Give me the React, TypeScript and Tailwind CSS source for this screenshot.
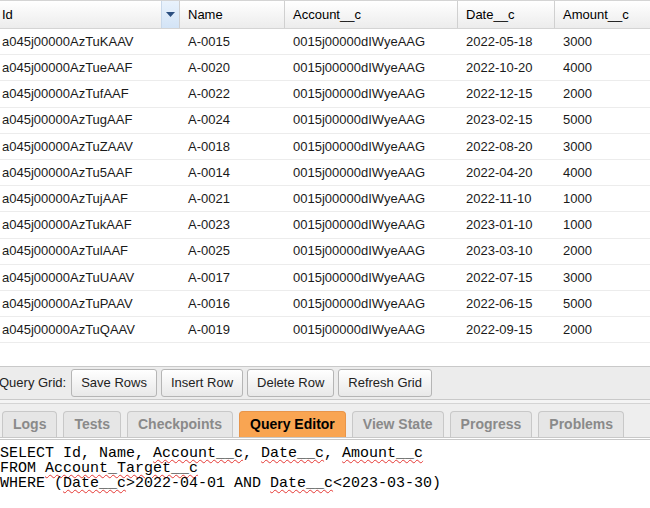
import React from "react"

type Row = {
  id: string
  name: string
  account: string
  date: string
  amount: string
}

const rows: Row[] = [
  { id: "a045j00000AzTuKAAV", name: "A-0015", account: "0015j00000dIWyeAAG", date: "2022-05-18", amount: "3000" },
  { id: "a045j00000AzTueAAF", name: "A-0020", account: "0015j00000dIWyeAAG", date: "2022-10-20", amount: "4000" },
  { id: "a045j00000AzTufAAF", name: "A-0022", account: "0015j00000dIWyeAAG", date: "2022-12-15", amount: "2000" },
  { id: "a045j00000AzTugAAF", name: "A-0024", account: "0015j00000dIWyeAAG", date: "2023-02-15", amount: "5000" },
  { id: "a045j00000AzTuZAAV", name: "A-0018", account: "0015j00000dIWyeAAG", date: "2022-08-20", amount: "3000" },
  { id: "a045j00000AzTu5AAF", name: "A-0014", account: "0015j00000dIWyeAAG", date: "2022-04-20", amount: "4000" },
  { id: "a045j00000AzTujAAF", name: "A-0021", account: "0015j00000dIWyeAAG", date: "2022-11-10", amount: "1000" },
  { id: "a045j00000AzTukAAF", name: "A-0023", account: "0015j00000dIWyeAAG", date: "2023-01-10", amount: "1000" },
  { id: "a045j00000AzTulAAF", name: "A-0025", account: "0015j00000dIWyeAAG", date: "2023-03-10", amount: "2000" },
  { id: "a045j00000AzTuUAAV", name: "A-0017", account: "0015j00000dIWyeAAG", date: "2022-07-15", amount: "3000" },
  { id: "a045j00000AzTuPAAV", name: "A-0016", account: "0015j00000dIWyeAAG", date: "2022-06-15", amount: "5000" },
  { id: "a045j00000AzTuQAAV", name: "A-0019", account: "0015j00000dIWyeAAG", date: "2022-09-15", amount: "2000" },
]

const tabs = ["Logs", "Tests", "Checkpoints", "Query Editor", "View State", "Progress", "Problems"]
const buttons = ["Save Rows", "Insert Row", "Delete Row", "Refresh Grid"]

function Squiggle(props: { children: React.ReactNode }) {
  return (
    <span className="underline decoration-wavy decoration-[#e53935] decoration-1 underline-offset-[2px]">
      {props.children}
    </span>
  )
}

function GridHeader() {
  return (
    <div className="flex h-[29px] border-t border-b border-[#d4d4d4] bg-gradient-to-b from-white to-[#ececec] text-[13px] text-black">
      <div className="flex w-[180px] border-r border-[#d0d0d0]">
        <div className="flex flex-1 items-center pl-[2px]">Id</div>
        <div className="flex w-[18px] items-center justify-center bg-gradient-to-b from-[#e9f2fc] to-[#d3e4f6] border-l border-[#c8d8ea]">
          <svg width="9" height="5" viewBox="0 0 9 5">
            <path d="M0 0 L9 0 L4.5 5 Z" fill="#2b4f80" />
          </svg>
        </div>
      </div>
      <div className="flex w-[105px] items-center border-r border-[#d0d0d0] pl-[8px]">Name</div>
      <div className="flex w-[173px] items-center border-r border-[#d0d0d0] pl-[8px]">Account__c</div>
      <div className="flex w-[97px] items-center border-r border-[#d0d0d0] pl-[8px]">Date__c</div>
      <div className="flex flex-1 items-center pl-[8px]">Amount__c</div>
    </div>
  )
}

function GridRow(props: { row: Row }) {
  const r = props.row
  return (
    <div className="flex h-[26.2px] items-center border-b border-[#ececec] text-[13px] text-[#1a1a1a]">
      <div className="w-[180px] pl-[2px]">{r.id}</div>
      <div className="w-[105px] pl-[8px]">{r.name}</div>
      <div className="w-[173px] pl-[8px]">{r.account}</div>
      <div className="w-[97px] pl-[8px]">{r.date}</div>
      <div className="flex-1 pl-[8px]">{r.amount}</div>
    </div>
  )
}

export default function App() {
  return (
    <div className="flex h-[508px] w-[650px] flex-col overflow-hidden bg-white font-['Liberation_Sans',Arial,sans-serif]">
      <GridHeader />
      <div className="h-[337px]">
        {rows.map((r) => (
          <GridRow key={r.id} row={r} />
        ))}
      </div>

      <div className="flex h-[34px] items-center gap-[4px] border-t border-b border-[#c9c9c9] bg-[#ececec] text-[13px] text-[#222]">
        <span className="mr-[1px] -ml-[1px]">Query Grid:</span>
        {buttons.map((b) => (
          <button
            key={b}
            className="h-[28px] rounded-[3px] border border-[#b5b5b5] bg-gradient-to-b from-white to-[#e8e8e8] px-[9px] text-[13px] text-[#222]"
          >
            {b}
          </button>
        ))}
      </div>

      <div className="flex h-[37px] items-end gap-[6px] border-t-[3px] border-[#f4f4f4] bg-[#eeeeee] pl-[2px] shadow-[inset_0_1px_0_#d4d4d4]">
        {tabs.map((t) => (
          <div
            key={t}
            className={`flex h-[26px] items-center rounded-t-[4px] border border-b-0 px-[10px] text-[14px] font-bold ${
              t === "Query Editor"
                ? "border-[#e8954a] bg-[#f9a552] text-black"
                : "border-[#c8c8c8] bg-[#e6e6e6] text-[#8a8a8a]"
            } ${t === "Logs" ? "px-[7px]" : ""}`}
          >
            {t}
          </div>
        ))}
      </div>
      <div className="h-[3px] border-t border-b border-[#c8c8c8] bg-white" />

      <div className="flex-1 bg-white pt-[6px] font-['Liberation_Mono','DejaVu_Sans_Mono',monospace] text-[15px] leading-[15px] text-black whitespace-pre">
        <div>
          SELECT Id, Name, <Squiggle>Account__c</Squiggle>, <Squiggle>Date__c</Squiggle>, <Squiggle>Amount__c</Squiggle>
        </div>
        <div>
          FROM <Squiggle>Account_Target__c</Squiggle>
        </div>
        <div>
          WHERE (<Squiggle>Date__c</Squiggle>&gt;2022-04-01 AND <Squiggle>Date__c</Squiggle>&lt;2023-03-30)
        </div>
      </div>
    </div>
  )
}
